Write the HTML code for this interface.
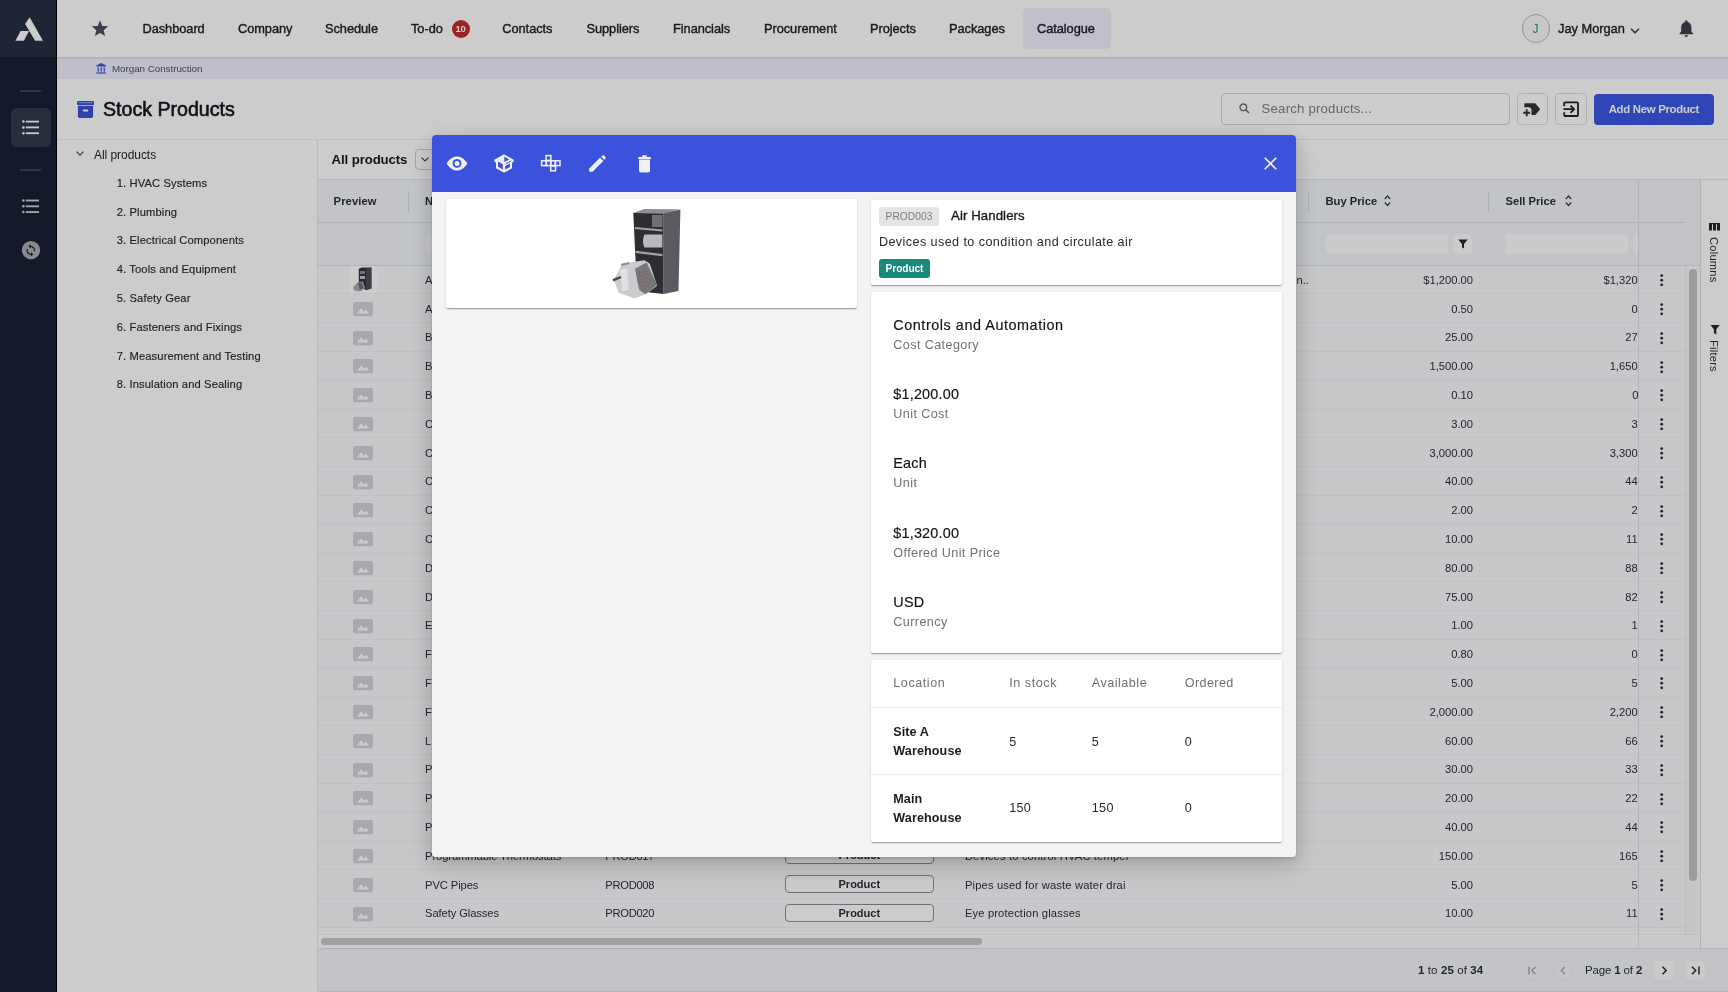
<!DOCTYPE html><html><head><meta charset="utf-8"><style>
*{box-sizing:border-box;margin:0;padding:0}
html,body{width:1728px;height:992px;overflow:hidden;background:#fff;font-family:"Liberation Sans",sans-serif;color:#1d1f24}
.a{position:absolute}
.t{position:absolute;white-space:nowrap;line-height:1}
svg{position:absolute;overflow:visible}
</style></head><body>
<div id="root" style="position:absolute;left:0;top:0;width:1728px;height:992px;overflow:hidden;will-change:transform">
<div class="a" style="left:0.00px;top:0.00px;width:56.00px;height:992.00px;background:#192033;"></div>
<div class="a" style="left:0.00px;top:0.00px;width:56.00px;height:57.00px;background:#263043;"></div>
<svg style="left:0;top:0" width="56" height="57"><polygon points="25.1,23.9 29.6,17.2 43,40.8 35.1,40.8" fill="#fff"/><polygon points="20.6,30.9 29,30.9 23.9,40.8 15.4,40.8" fill="#fff"/></svg>
<div class="a" style="left:56.00px;top:0.00px;width:1.00px;height:992.00px;background:#000;"></div>
<div class="a" style="left:20.00px;top:90.00px;width:21.00px;height:1.50px;background:#3a4358;"></div>
<div class="a" style="left:11.00px;top:107.60px;width:39.50px;height:39.90px;background:#313a4c;border-radius:6px;"></div>
<svg style="left:0px;top:0px" width="56" height="260"><circle cx="23.4" cy="121.6" r="1.25" fill="#ffffff"/><rect x="25.8" y="120.69999999999999" width="13.2" height="1.8" fill="#ffffff"/><circle cx="23.4" cy="127.39999999999999" r="1.25" fill="#ffffff"/><rect x="25.8" y="126.49999999999999" width="13.2" height="1.8" fill="#ffffff"/><circle cx="23.4" cy="133.2" r="1.25" fill="#ffffff"/><rect x="25.8" y="132.29999999999998" width="13.2" height="1.8" fill="#ffffff"/></svg>
<div class="a" style="left:20.00px;top:169.00px;width:21.00px;height:1.50px;background:#3a4358;"></div>
<svg style="left:0px;top:0px" width="56" height="260"><circle cx="23.4" cy="200.5" r="1.25" fill="#cfd1d6"/><rect x="25.8" y="199.6" width="13.2" height="1.8" fill="#cfd1d6"/><circle cx="23.4" cy="206.3" r="1.25" fill="#cfd1d6"/><rect x="25.8" y="205.4" width="13.2" height="1.8" fill="#cfd1d6"/><circle cx="23.4" cy="212.1" r="1.25" fill="#cfd1d6"/><rect x="25.8" y="211.2" width="13.2" height="1.8" fill="#cfd1d6"/></svg>
<svg style="left:0px;top:230px" width="56" height="40" viewBox="0 230 56 40"><circle cx="31" cy="250.1" r="9.2" fill="#aaadb3"/><path d="M30.2 246.3 Q34.6 246.4 34.6 251.3" stroke="#1c2130" stroke-width="1.2" fill="none"/><polygon points="28.4,246.3 30.8,244.2 30.8,248.4" fill="#1c2130"/><path d="M27 248.9 Q27 254.3 31.2 254.3" stroke="#1c2130" stroke-width="1.2" fill="none"/><polygon points="33.4,254.3 31,252.2 31,256.4" fill="#1c2130"/></svg>
<div class="a" style="left:57.00px;top:0.00px;width:1671.00px;height:57.00px;background:#ffffff;"></div>
<div class="a" style="left:57.00px;top:57.00px;width:1671.00px;height:2.00px;background:#dfe0e6;"></div>
<div class="a" style="left:1023.00px;top:8.00px;width:87.50px;height:41.00px;background:#f0f0fc;border-radius:5px;"></div>
<svg style="left:91px;top:20px" width="18" height="17" viewBox="0 0 24 23"><path d="M12 0.5 L15.1 8 L23.2 8.6 L17 13.9 L18.9 21.8 L12 17.6 L5.1 21.8 L7 13.9 L0.8 8.6 L8.9 8 Z" fill="#4a4f5e"/></svg>
<div class="t" style="top:23.22px;font-size:12.8px;font-weight:400;color:#1e2027;letter-spacing:-0.05px;left:142.50px;-webkit-text-stroke:0.4px #1e2027;">Dashboard</div>
<div class="t" style="top:23.22px;font-size:12.8px;font-weight:400;color:#1e2027;letter-spacing:-0.05px;left:238.00px;-webkit-text-stroke:0.4px #1e2027;">Company</div>
<div class="t" style="top:23.22px;font-size:12.8px;font-weight:400;color:#1e2027;letter-spacing:-0.05px;left:325.00px;-webkit-text-stroke:0.4px #1e2027;">Schedule</div>
<div class="t" style="top:23.22px;font-size:12.8px;font-weight:400;color:#1e2027;letter-spacing:-0.05px;left:411.00px;-webkit-text-stroke:0.4px #1e2027;">To-do</div>
<div class="t" style="top:23.22px;font-size:12.8px;font-weight:400;color:#1e2027;letter-spacing:-0.05px;left:502.30px;-webkit-text-stroke:0.4px #1e2027;">Contacts</div>
<div class="t" style="top:23.22px;font-size:12.8px;font-weight:400;color:#1e2027;letter-spacing:-0.05px;left:586.50px;-webkit-text-stroke:0.4px #1e2027;">Suppliers</div>
<div class="t" style="top:23.22px;font-size:12.8px;font-weight:400;color:#1e2027;letter-spacing:-0.05px;left:673.00px;-webkit-text-stroke:0.4px #1e2027;">Financials</div>
<div class="t" style="top:23.22px;font-size:12.8px;font-weight:400;color:#1e2027;letter-spacing:-0.05px;left:764.00px;-webkit-text-stroke:0.4px #1e2027;">Procurement</div>
<div class="t" style="top:23.22px;font-size:12.8px;font-weight:400;color:#1e2027;letter-spacing:-0.05px;left:870.00px;-webkit-text-stroke:0.4px #1e2027;">Projects</div>
<div class="t" style="top:23.22px;font-size:12.8px;font-weight:400;color:#1e2027;letter-spacing:-0.05px;left:949.00px;-webkit-text-stroke:0.4px #1e2027;">Packages</div>
<div class="t" style="top:23.22px;font-size:12.8px;font-weight:400;color:#1e2027;letter-spacing:-0.05px;left:1037.00px;-webkit-text-stroke:0.4px #1e2027;">Catalogue</div>
<div class="a" style="left:451.5px;top:20px;width:18px;height:18px;border-radius:9px;background:#c62a2c;color:#fff;font-size:9.5px;font-weight:700;line-height:18px;text-align:center;letter-spacing:-0.3px">10</div>
<div class="a" style="left:1521.8px;top:14.3px;width:28.6px;height:28.6px;border-radius:50%;border:1px solid #b9bcc2;background:#fbfbfb"></div>
<div class="t" style="top:22.80px;font-size:12px;font-weight:400;color:#2f8f86;left:1532.50px;">J</div>
<div class="t" style="top:23.22px;font-size:12.8px;font-weight:400;color:#1e2027;left:1558.00px;-webkit-text-stroke:0.4px #1e2027;">Jay Morgan</div>
<svg style="left:1630px;top:28px" width="10" height="6"><path d="M1 0.8 L5 4.8 L9 0.8" stroke="#333" stroke-width="1.4" fill="none"/></svg>
<svg style="left:1675.6px;top:18.2px" width="20.6" height="20.6" viewBox="0 0 24 24"><path d="M12 22c1.1 0 2-.9 2-2h-4c0 1.1.9 2 2 2zm6-6v-5c0-3.07-1.64-5.64-4.5-6.32V4c0-.83-.67-1.5-1.5-1.5s-1.5.67-1.5 1.5v.68C7.63 5.36 6 7.92 6 11v5l-2 2v1h16v-1l-2-2z" fill="#3c404b"/></svg>
<div class="a" style="left:57.00px;top:59.00px;width:1671.00px;height:20.00px;background:#eeeffb;"></div>
<svg style="left:95.6px;top:62.6px" width="10.4" height="10.6" viewBox="0 0 11 11.5"><path d="M5.5 0 L10.8 2.6 L10.8 3.8 L0.2 3.8 L0.2 2.6 Z" fill="#3c53d6"/><rect x="1.5" y="4.8" width="1.4" height="4.6" fill="#3c53d6"/><rect x="4.8" y="4.8" width="1.4" height="4.6" fill="#3c53d6"/><rect x="8.1" y="4.8" width="1.4" height="4.6" fill="#3c53d6"/><rect x="0.2" y="10.2" width="10.6" height="1.3" fill="#3c53d6"/></svg>
<div class="t" style="top:63.57px;font-size:9.8px;font-weight:400;color:#50535c;letter-spacing:-0.02px;left:111.90px;">Morgan Construction</div>
<svg style="left:77px;top:100.8px" width="17" height="17" viewBox="0 0 17 17"><rect x="0" y="0" width="17" height="4.2" rx="1.3" fill="#3a51d4"/><path d="M0.9 5 H16.1 V15.2 Q16.1 17 14.3 17 H2.7 Q0.9 17 0.9 15.2 Z" fill="#3a51d4"/><rect x="5.8" y="8.6" width="5.4" height="1.8" rx="0.6" fill="#fff"/><rect x="1.6" y="1.2" width="13.8" height="1" fill="#9aa6ea"/></svg>
<div class="t" style="top:99.84px;font-size:19.6px;font-weight:400;color:#111722;left:103.00px;-webkit-text-stroke:0.6px #111722;">Stock Products</div>
<div class="a" style="left:1221.4px;top:93.4px;width:288.5px;height:31.5px;border:1px solid #d3d4d8;border-radius:4px;background:#fff"></div>
<svg style="left:1238.5px;top:103px" width="11" height="11" viewBox="0 0 11 11"><circle cx="4.3" cy="4.3" r="3.3" stroke="#6c6f76" stroke-width="1.4" fill="none"/><path d="M6.7 6.7 L10 10" stroke="#6c6f76" stroke-width="1.6"/></svg>
<div class="t" style="top:102.48px;font-size:13.2px;font-weight:400;color:#7d8088;letter-spacing:0.2px;left:1261.60px;">Search products...</div>
<div class="a" style="left:1516.5px;top:93.4px;width:31.5px;height:31.5px;border:1px solid #dcdee6;border-radius:4px;background:#fff"></div>
<div class="a" style="left:1555.3px;top:93.4px;width:31.5px;height:31.5px;border:1px solid #dcdee6;border-radius:4px;background:#fff"></div>
<svg style="left:1512px;top:90px" width="80" height="38" viewBox="1512 90 80 38"><path d="M1525.3 103.2 H1535.3 L1540.2 109.2 L1535.3 115 H1531.5 V110.5 Q1531.5 107.2 1528.5 107.2 H1524.3 V104.2 Q1524.3 103.2 1525.3 103.2 Z" fill="#30343c"/><path d="M1523.2 112.7 H1530.2 M1526.7 109.2 V116.2" stroke="#30343c" stroke-width="1.9"/></svg>
<svg style="left:1512px;top:90px" width="80" height="38" viewBox="1512 90 80 38"><path d="M1564.2 106.2 V103.3 Q1564.2 102.3 1565.2 102.3 H1577 Q1578 102.3 1578 103.3 V115 Q1578 116 1577 116 H1565.2 Q1564.2 116 1564.2 115 V112.2" stroke="#1f232b" stroke-width="1.8" fill="none"/><path d="M1563.4 109.2 H1574 M1570.5 105.6 L1574.1 109.2 L1570.5 112.8" stroke="#1f232b" stroke-width="1.8" fill="none"/></svg>
<div class="a" style="left:1594.3px;top:94px;width:119.3px;height:30.6px;border-radius:4px;background:#3d58e6"></div>
<div class="t" style="top:103.61px;font-size:11.4px;font-weight:700;color:#ffffff;letter-spacing:-0.3px;left:1608.70px;">Add New Product</div>
<div class="a" style="left:57.00px;top:139.00px;width:1671.00px;height:1.00px;background:#eef0f3;"></div>
<svg style="left:75.5px;top:151px" width="8" height="5.5"><path d="M0.6 0.6 L4 4.2 L7.4 0.6" stroke="#444" stroke-width="1.2" fill="none"/></svg>
<div class="t" style="top:148.80px;font-size:12px;font-weight:400;color:#22252b;letter-spacing:-0.05px;left:94.00px;">All products</div>
<div class="t" style="top:177.88px;font-size:11.2px;font-weight:400;color:#262930;letter-spacing:0.12px;left:116.70px;-webkit-text-stroke:0.15px #262930;">1. HVAC Systems</div>
<div class="t" style="top:206.68px;font-size:11.2px;font-weight:400;color:#262930;letter-spacing:0.12px;left:116.70px;-webkit-text-stroke:0.15px #262930;">2. Plumbing</div>
<div class="t" style="top:235.48px;font-size:11.2px;font-weight:400;color:#262930;letter-spacing:0.12px;left:116.70px;-webkit-text-stroke:0.15px #262930;">3. Electrical Components</div>
<div class="t" style="top:264.28px;font-size:11.2px;font-weight:400;color:#262930;letter-spacing:0.12px;left:116.70px;-webkit-text-stroke:0.15px #262930;">4. Tools and Equipment</div>
<div class="t" style="top:293.08px;font-size:11.2px;font-weight:400;color:#262930;letter-spacing:0.12px;left:116.70px;-webkit-text-stroke:0.15px #262930;">5. Safety Gear</div>
<div class="t" style="top:321.88px;font-size:11.2px;font-weight:400;color:#262930;letter-spacing:0.12px;left:116.70px;-webkit-text-stroke:0.15px #262930;">6. Fasteners and Fixings</div>
<div class="t" style="top:350.68px;font-size:11.2px;font-weight:400;color:#262930;letter-spacing:0.12px;left:116.70px;-webkit-text-stroke:0.15px #262930;">7. Measurement and Testing</div>
<div class="t" style="top:379.48px;font-size:11.2px;font-weight:400;color:#262930;letter-spacing:0.12px;left:116.70px;-webkit-text-stroke:0.15px #262930;">8. Insulation and Sealing</div>
<div class="a" style="left:317.00px;top:140.00px;width:1.00px;height:852.00px;background:#e6e8ec;"></div>
<div class="t" style="top:152.78px;font-size:13.2px;font-weight:700;color:#15181f;letter-spacing:-0.1px;left:331.60px;">All products</div>
<div class="a" style="left:414.5px;top:149px;width:30px;height:21.4px;border:1px solid #c7ccef;border-radius:4px;background:#fff"></div>
<svg style="left:421px;top:157px" width="8" height="5"><path d="M0.6 0.6 L4 4 L7.4 0.6" stroke="#444" stroke-width="1.2" fill="none"/></svg>
<div class="a" style="left:318.00px;top:265.60px;width:1366.70px;height:668.20px;background:#f9fafd;"></div>
<div class="a" style="left:318.00px;top:179.60px;width:1382.40px;height:86.00px;background:#f3f6fb;"></div>
<div class="a" style="left:318.00px;top:221.80px;width:1366.70px;height:1.00px;background:#dfe2e8;"></div>
<div class="a" style="left:318.00px;top:265.20px;width:1382.40px;height:0.80px;background:#dfe2e8;"></div>
<div class="a" style="left:1700.20px;top:179.60px;width:27.80px;height:768.90px;background:#ffffff;"></div>
<div class="a" style="left:1700.20px;top:179.60px;width:1.00px;height:768.90px;background:#dde0e6;"></div>
<div class="a" style="left:318.00px;top:179.20px;width:1410.00px;height:0.60px;background:#e5e7ec;"></div>
<div class="t" style="top:195.68px;font-size:11.2px;font-weight:700;color:#2a2d35;letter-spacing:0.1px;left:333.60px;">Preview</div>
<div class="a" style="left:408.00px;top:190.70px;width:1.00px;height:21.10px;background:#d9dce3;"></div>
<div class="t" style="top:195.68px;font-size:11.2px;font-weight:700;color:#2a2d35;letter-spacing:0.1px;left:425.00px;">Name</div>
<div class="a" style="left:1308.00px;top:190.70px;width:1.00px;height:21.10px;background:#d9dce3;"></div>
<div class="t" style="top:195.68px;font-size:11.2px;font-weight:700;color:#2a2d35;left:1325.50px;">Buy Price</div>
<div class="a" style="left:1488.20px;top:190.70px;width:1.00px;height:21.10px;background:#d9dce3;"></div>
<div class="t" style="top:195.68px;font-size:11.2px;font-weight:700;color:#2a2d35;left:1505.50px;">Sell Price</div>
<svg style="left:1384.3px;top:195.3px" width="7" height="11.5"><path d="M0.8 4 L3.5 1 L6.2 4 M0.8 7.5 L3.5 10.5 L6.2 7.5" stroke="#3a3d45" stroke-width="1.3" fill="none"/></svg>
<svg style="left:1564.5px;top:195.3px" width="7" height="11.5"><path d="M0.8 4 L3.5 1 L6.2 4 M0.8 7.5 L3.5 10.5 L6.2 7.5" stroke="#3a3d45" stroke-width="1.3" fill="none"/></svg>
<div class="a" style="left:425.5px;top:233.8px;width:154.5px;height:19.8px;border-radius:4px;background:#fefefe"></div>
<div class="a" style="left:1325.5px;top:233.8px;width:122.40000000000009px;height:19.8px;border-radius:4px;background:#fefefe"></div>
<div class="a" style="left:1505.5px;top:233.8px;width:122.5px;height:19.8px;border-radius:4px;background:#fefefe"></div>
<div class="a" style="left:1452.7px;top:233.8px;width:19.3px;height:19.8px;border-radius:4px;background:#fefefe;overflow:hidden"></div>
<div class="a" style="left:1632.7px;top:233.8px;width:5.8px;height:19.8px;border-radius:4px 0 0 4px;background:#fefefe"></div>
<svg style="left:1457.5px;top:238.5px" width="10" height="10" viewBox="0 0 10 10"><path d="M0.3 0.5 H9.7 L6 5 V9.5 L4 8.2 V5 Z" fill="#262930"/></svg>
<div class="a" style="left:1638.20px;top:179.60px;width:1.00px;height:768.90px;background:#dfe2e8;"></div>
<div class="a" style="left:318.00px;top:293.00px;width:1366.70px;height:1.00px;background:#f0f2f5;"></div>
<svg style="left:349.6px;top:266.20000000000005px" width="27.4" height="27.2" viewBox="0 0 27.4 27.2"><rect x="0" y="0" width="27.4" height="27.2" fill="#ffffff"/><path d="M8.8 2.8 L12 1.5 L21.4 1.5 L21.4 22.5 L16 24 L8.8 21 Z" fill="#30343c"/><path d="M16 2.6 L21.4 1.5 L21.4 22.5 L16 24 Z" fill="#4a4e57"/><rect x="10" y="5" width="5" height="3" fill="#8d9199"/><rect x="10" y="10" width="5" height="3" fill="#c4c6ca"/><path d="M3.2 21 L8 16 L13 15.5 L15 22 L10 25.5 L4 24.5 Z" fill="#a9acb2"/><path d="M8 17 L12 16.5 L13.5 22 L10 24 Z" fill="#6a6e75"/></svg>
<div class="t" style="top:274.78px;font-size:11.2px;font-weight:400;color:#2b2e36;letter-spacing:-0.1px;left:425.10px;">A</div>
<div class="t" style="top:274.78px;font-size:11.2px;font-weight:400;color:#2b2e36;letter-spacing:-0.3px;left:605.30px;">PROD003</div>
<div class="a" style="left:785px;top:270.40000000000003px;width:148.6px;height:18px;border:1px solid #8a8d94;border-radius:4px;background:#fff;text-align:center;font-size:11px;font-weight:700;line-height:16px;color:#2b2e36">Product</div>
<div class="t" style="top:274.78px;font-size:11.2px;font-weight:400;color:#2b2e36;letter-spacing:0.15px;left:964.90px;">Devices used to condition and circulate air</div>
<div class="t" style="top:274.78px;font-size:11.2px;font-weight:400;color:#2b2e36;right:255.00px;">$1,200.00</div>
<div class="a" style="left:1489.2px;top:265.6px;width:149px;height:28.8px;overflow:hidden"><div class="t" style="right:-15px;top:9.18px;font-size:11.2px;color:#2b2e36">$1,320.00</div></div>
<svg style="left:1659.8px;top:274.20000000000005px" width="3.4" height="12"><circle cx="1.7" cy="1.6" r="1.4" fill="#2b2e36"/><circle cx="1.7" cy="6.2" r="1.4" fill="#2b2e36"/><circle cx="1.7" cy="10.8" r="1.4" fill="#2b2e36"/></svg>
<div class="a" style="left:318.00px;top:322.00px;width:1366.70px;height:1.00px;background:#f0f2f5;"></div>
<svg style="left:353.3px;top:301.70000000000005px" width="20" height="14.3" viewBox="0 0 20 14.3"><rect width="20" height="14.3" rx="1.8" fill="#d2d4da"/><path d="M4 11.5 L8 6.5 L11 9.5 L13 7.8 L16 11.5 Z" fill="#fff"/></svg>
<div class="t" style="top:303.58px;font-size:11.2px;font-weight:400;color:#2b2e36;letter-spacing:-0.1px;left:425.10px;">A</div>
<div class="t" style="top:303.58px;font-size:11.2px;font-weight:400;color:#2b2e36;letter-spacing:-0.3px;left:605.30px;">PROD001</div>
<div class="a" style="left:785px;top:299.20000000000005px;width:148.6px;height:18px;border:1px solid #8a8d94;border-radius:4px;background:#fff;text-align:center;font-size:11px;font-weight:700;line-height:16px;color:#2b2e36">Product</div>
<div class="t" style="top:303.58px;font-size:11.2px;font-weight:400;color:#2b2e36;right:255.00px;">0.50</div>
<div class="a" style="left:1489.2px;top:294.40000000000003px;width:149px;height:28.8px;overflow:hidden"><div class="t" style="right:-15px;top:9.18px;font-size:11.2px;color:#2b2e36">0.55</div></div>
<svg style="left:1659.8px;top:303.00000000000006px" width="3.4" height="12"><circle cx="1.7" cy="1.6" r="1.4" fill="#2b2e36"/><circle cx="1.7" cy="6.2" r="1.4" fill="#2b2e36"/><circle cx="1.7" cy="10.8" r="1.4" fill="#2b2e36"/></svg>
<div class="a" style="left:318.00px;top:351.00px;width:1366.70px;height:1.00px;background:#f0f2f5;"></div>
<svg style="left:353.3px;top:330.50000000000006px" width="20" height="14.3" viewBox="0 0 20 14.3"><rect width="20" height="14.3" rx="1.8" fill="#d2d4da"/><path d="M4 11.5 L8 6.5 L11 9.5 L13 7.8 L16 11.5 Z" fill="#fff"/></svg>
<div class="t" style="top:332.38px;font-size:11.2px;font-weight:400;color:#2b2e36;letter-spacing:-0.1px;left:425.10px;">B</div>
<div class="t" style="top:332.38px;font-size:11.2px;font-weight:400;color:#2b2e36;letter-spacing:-0.3px;left:605.30px;">PROD002</div>
<div class="a" style="left:785px;top:328.00000000000006px;width:148.6px;height:18px;border:1px solid #8a8d94;border-radius:4px;background:#fff;text-align:center;font-size:11px;font-weight:700;line-height:16px;color:#2b2e36">Product</div>
<div class="t" style="top:332.38px;font-size:11.2px;font-weight:400;color:#2b2e36;right:255.00px;">25.00</div>
<div class="a" style="left:1489.2px;top:323.20000000000005px;width:149px;height:28.8px;overflow:hidden"><div class="t" style="right:-15px;top:9.18px;font-size:11.2px;color:#2b2e36">27.50</div></div>
<svg style="left:1659.8px;top:331.80000000000007px" width="3.4" height="12"><circle cx="1.7" cy="1.6" r="1.4" fill="#2b2e36"/><circle cx="1.7" cy="6.2" r="1.4" fill="#2b2e36"/><circle cx="1.7" cy="10.8" r="1.4" fill="#2b2e36"/></svg>
<div class="a" style="left:318.00px;top:380.00px;width:1366.70px;height:1.00px;background:#f0f2f5;"></div>
<svg style="left:353.3px;top:359.3px" width="20" height="14.3" viewBox="0 0 20 14.3"><rect width="20" height="14.3" rx="1.8" fill="#d2d4da"/><path d="M4 11.5 L8 6.5 L11 9.5 L13 7.8 L16 11.5 Z" fill="#fff"/></svg>
<div class="t" style="top:361.18px;font-size:11.2px;font-weight:400;color:#2b2e36;letter-spacing:-0.1px;left:425.10px;">B</div>
<div class="t" style="top:361.18px;font-size:11.2px;font-weight:400;color:#2b2e36;letter-spacing:-0.3px;left:605.30px;">PROD004</div>
<div class="a" style="left:785px;top:356.8px;width:148.6px;height:18px;border:1px solid #8a8d94;border-radius:4px;background:#fff;text-align:center;font-size:11px;font-weight:700;line-height:16px;color:#2b2e36">Product</div>
<div class="t" style="top:361.18px;font-size:11.2px;font-weight:400;color:#2b2e36;right:255.00px;">1,500.00</div>
<div class="a" style="left:1489.2px;top:352.0px;width:149px;height:28.8px;overflow:hidden"><div class="t" style="right:-15px;top:9.18px;font-size:11.2px;color:#2b2e36">1,650.00</div></div>
<svg style="left:1659.8px;top:360.6px" width="3.4" height="12"><circle cx="1.7" cy="1.6" r="1.4" fill="#2b2e36"/><circle cx="1.7" cy="6.2" r="1.4" fill="#2b2e36"/><circle cx="1.7" cy="10.8" r="1.4" fill="#2b2e36"/></svg>
<div class="a" style="left:318.00px;top:409.00px;width:1366.70px;height:1.00px;background:#f0f2f5;"></div>
<svg style="left:353.3px;top:388.1px" width="20" height="14.3" viewBox="0 0 20 14.3"><rect width="20" height="14.3" rx="1.8" fill="#d2d4da"/><path d="M4 11.5 L8 6.5 L11 9.5 L13 7.8 L16 11.5 Z" fill="#fff"/></svg>
<div class="t" style="top:389.98px;font-size:11.2px;font-weight:400;color:#2b2e36;letter-spacing:-0.1px;left:425.10px;">B</div>
<div class="t" style="top:389.98px;font-size:11.2px;font-weight:400;color:#2b2e36;letter-spacing:-0.3px;left:605.30px;">PROD005</div>
<div class="a" style="left:785px;top:385.6px;width:148.6px;height:18px;border:1px solid #8a8d94;border-radius:4px;background:#fff;text-align:center;font-size:11px;font-weight:700;line-height:16px;color:#2b2e36">Product</div>
<div class="t" style="top:389.98px;font-size:11.2px;font-weight:400;color:#2b2e36;right:255.00px;">0.10</div>
<div class="a" style="left:1489.2px;top:380.8px;width:149px;height:28.8px;overflow:hidden"><div class="t" style="right:-15px;top:9.18px;font-size:11.2px;color:#2b2e36">0.11</div></div>
<svg style="left:1659.8px;top:389.40000000000003px" width="3.4" height="12"><circle cx="1.7" cy="1.6" r="1.4" fill="#2b2e36"/><circle cx="1.7" cy="6.2" r="1.4" fill="#2b2e36"/><circle cx="1.7" cy="10.8" r="1.4" fill="#2b2e36"/></svg>
<div class="a" style="left:318.00px;top:437.00px;width:1366.70px;height:1.00px;background:#f0f2f5;"></div>
<svg style="left:353.3px;top:416.90000000000003px" width="20" height="14.3" viewBox="0 0 20 14.3"><rect width="20" height="14.3" rx="1.8" fill="#d2d4da"/><path d="M4 11.5 L8 6.5 L11 9.5 L13 7.8 L16 11.5 Z" fill="#fff"/></svg>
<div class="t" style="top:418.78px;font-size:11.2px;font-weight:400;color:#2b2e36;letter-spacing:-0.1px;left:425.10px;">C</div>
<div class="t" style="top:418.78px;font-size:11.2px;font-weight:400;color:#2b2e36;letter-spacing:-0.3px;left:605.30px;">PROD006</div>
<div class="a" style="left:785px;top:414.40000000000003px;width:148.6px;height:18px;border:1px solid #8a8d94;border-radius:4px;background:#fff;text-align:center;font-size:11px;font-weight:700;line-height:16px;color:#2b2e36">Product</div>
<div class="t" style="top:418.78px;font-size:11.2px;font-weight:400;color:#2b2e36;right:255.00px;">3.00</div>
<div class="a" style="left:1489.2px;top:409.6px;width:149px;height:28.8px;overflow:hidden"><div class="t" style="right:-15px;top:9.18px;font-size:11.2px;color:#2b2e36">3.30</div></div>
<svg style="left:1659.8px;top:418.20000000000005px" width="3.4" height="12"><circle cx="1.7" cy="1.6" r="1.4" fill="#2b2e36"/><circle cx="1.7" cy="6.2" r="1.4" fill="#2b2e36"/><circle cx="1.7" cy="10.8" r="1.4" fill="#2b2e36"/></svg>
<div class="a" style="left:318.00px;top:466.00px;width:1366.70px;height:1.00px;background:#f0f2f5;"></div>
<svg style="left:353.3px;top:445.70000000000005px" width="20" height="14.3" viewBox="0 0 20 14.3"><rect width="20" height="14.3" rx="1.8" fill="#d2d4da"/><path d="M4 11.5 L8 6.5 L11 9.5 L13 7.8 L16 11.5 Z" fill="#fff"/></svg>
<div class="t" style="top:447.58px;font-size:11.2px;font-weight:400;color:#2b2e36;letter-spacing:-0.1px;left:425.10px;">C</div>
<div class="t" style="top:447.58px;font-size:11.2px;font-weight:400;color:#2b2e36;letter-spacing:-0.3px;left:605.30px;">PROD007</div>
<div class="a" style="left:785px;top:443.20000000000005px;width:148.6px;height:18px;border:1px solid #8a8d94;border-radius:4px;background:#fff;text-align:center;font-size:11px;font-weight:700;line-height:16px;color:#2b2e36">Product</div>
<div class="t" style="top:447.58px;font-size:11.2px;font-weight:400;color:#2b2e36;right:255.00px;">3,000.00</div>
<div class="a" style="left:1489.2px;top:438.40000000000003px;width:149px;height:28.8px;overflow:hidden"><div class="t" style="right:-15px;top:9.18px;font-size:11.2px;color:#2b2e36">3,300.00</div></div>
<svg style="left:1659.8px;top:447.00000000000006px" width="3.4" height="12"><circle cx="1.7" cy="1.6" r="1.4" fill="#2b2e36"/><circle cx="1.7" cy="6.2" r="1.4" fill="#2b2e36"/><circle cx="1.7" cy="10.8" r="1.4" fill="#2b2e36"/></svg>
<div class="a" style="left:318.00px;top:495.00px;width:1366.70px;height:1.00px;background:#f0f2f5;"></div>
<svg style="left:353.3px;top:474.50000000000006px" width="20" height="14.3" viewBox="0 0 20 14.3"><rect width="20" height="14.3" rx="1.8" fill="#d2d4da"/><path d="M4 11.5 L8 6.5 L11 9.5 L13 7.8 L16 11.5 Z" fill="#fff"/></svg>
<div class="t" style="top:476.38px;font-size:11.2px;font-weight:400;color:#2b2e36;letter-spacing:-0.1px;left:425.10px;">C</div>
<div class="t" style="top:476.38px;font-size:11.2px;font-weight:400;color:#2b2e36;letter-spacing:-0.3px;left:605.30px;">PROD009</div>
<div class="a" style="left:785px;top:472.00000000000006px;width:148.6px;height:18px;border:1px solid #8a8d94;border-radius:4px;background:#fff;text-align:center;font-size:11px;font-weight:700;line-height:16px;color:#2b2e36">Product</div>
<div class="t" style="top:476.38px;font-size:11.2px;font-weight:400;color:#2b2e36;right:255.00px;">40.00</div>
<div class="a" style="left:1489.2px;top:467.20000000000005px;width:149px;height:28.8px;overflow:hidden"><div class="t" style="right:-15px;top:9.18px;font-size:11.2px;color:#2b2e36">44.00</div></div>
<svg style="left:1659.8px;top:475.80000000000007px" width="3.4" height="12"><circle cx="1.7" cy="1.6" r="1.4" fill="#2b2e36"/><circle cx="1.7" cy="6.2" r="1.4" fill="#2b2e36"/><circle cx="1.7" cy="10.8" r="1.4" fill="#2b2e36"/></svg>
<div class="a" style="left:318.00px;top:524.00px;width:1366.70px;height:1.00px;background:#f0f2f5;"></div>
<svg style="left:353.3px;top:503.3px" width="20" height="14.3" viewBox="0 0 20 14.3"><rect width="20" height="14.3" rx="1.8" fill="#d2d4da"/><path d="M4 11.5 L8 6.5 L11 9.5 L13 7.8 L16 11.5 Z" fill="#fff"/></svg>
<div class="t" style="top:505.18px;font-size:11.2px;font-weight:400;color:#2b2e36;letter-spacing:-0.1px;left:425.10px;">C</div>
<div class="t" style="top:505.18px;font-size:11.2px;font-weight:400;color:#2b2e36;letter-spacing:-0.3px;left:605.30px;">PROD010</div>
<div class="a" style="left:785px;top:500.8px;width:148.6px;height:18px;border:1px solid #8a8d94;border-radius:4px;background:#fff;text-align:center;font-size:11px;font-weight:700;line-height:16px;color:#2b2e36">Product</div>
<div class="t" style="top:505.18px;font-size:11.2px;font-weight:400;color:#2b2e36;right:255.00px;">2.00</div>
<div class="a" style="left:1489.2px;top:496.0px;width:149px;height:28.8px;overflow:hidden"><div class="t" style="right:-15px;top:9.18px;font-size:11.2px;color:#2b2e36">2.20</div></div>
<svg style="left:1659.8px;top:504.6px" width="3.4" height="12"><circle cx="1.7" cy="1.6" r="1.4" fill="#2b2e36"/><circle cx="1.7" cy="6.2" r="1.4" fill="#2b2e36"/><circle cx="1.7" cy="10.8" r="1.4" fill="#2b2e36"/></svg>
<div class="a" style="left:318.00px;top:553.00px;width:1366.70px;height:1.00px;background:#f0f2f5;"></div>
<svg style="left:353.3px;top:532.0999999999999px" width="20" height="14.3" viewBox="0 0 20 14.3"><rect width="20" height="14.3" rx="1.8" fill="#d2d4da"/><path d="M4 11.5 L8 6.5 L11 9.5 L13 7.8 L16 11.5 Z" fill="#fff"/></svg>
<div class="t" style="top:533.98px;font-size:11.2px;font-weight:400;color:#2b2e36;letter-spacing:-0.1px;left:425.10px;">C</div>
<div class="t" style="top:533.98px;font-size:11.2px;font-weight:400;color:#2b2e36;letter-spacing:-0.3px;left:605.30px;">PROD011</div>
<div class="a" style="left:785px;top:529.5999999999999px;width:148.6px;height:18px;border:1px solid #8a8d94;border-radius:4px;background:#fff;text-align:center;font-size:11px;font-weight:700;line-height:16px;color:#2b2e36">Product</div>
<div class="t" style="top:533.98px;font-size:11.2px;font-weight:400;color:#2b2e36;right:255.00px;">10.00</div>
<div class="a" style="left:1489.2px;top:524.8px;width:149px;height:28.8px;overflow:hidden"><div class="t" style="right:-15px;top:9.18px;font-size:11.2px;color:#2b2e36">11.00</div></div>
<svg style="left:1659.8px;top:533.4px" width="3.4" height="12"><circle cx="1.7" cy="1.6" r="1.4" fill="#2b2e36"/><circle cx="1.7" cy="6.2" r="1.4" fill="#2b2e36"/><circle cx="1.7" cy="10.8" r="1.4" fill="#2b2e36"/></svg>
<div class="a" style="left:318.00px;top:581.00px;width:1366.70px;height:1.00px;background:#f0f2f5;"></div>
<svg style="left:353.3px;top:560.9px" width="20" height="14.3" viewBox="0 0 20 14.3"><rect width="20" height="14.3" rx="1.8" fill="#d2d4da"/><path d="M4 11.5 L8 6.5 L11 9.5 L13 7.8 L16 11.5 Z" fill="#fff"/></svg>
<div class="t" style="top:562.78px;font-size:11.2px;font-weight:400;color:#2b2e36;letter-spacing:-0.1px;left:425.10px;">D</div>
<div class="t" style="top:562.78px;font-size:11.2px;font-weight:400;color:#2b2e36;letter-spacing:-0.3px;left:605.30px;">PROD012</div>
<div class="a" style="left:785px;top:558.4px;width:148.6px;height:18px;border:1px solid #8a8d94;border-radius:4px;background:#fff;text-align:center;font-size:11px;font-weight:700;line-height:16px;color:#2b2e36">Product</div>
<div class="t" style="top:562.78px;font-size:11.2px;font-weight:400;color:#2b2e36;right:255.00px;">80.00</div>
<div class="a" style="left:1489.2px;top:553.6px;width:149px;height:28.8px;overflow:hidden"><div class="t" style="right:-15px;top:9.18px;font-size:11.2px;color:#2b2e36">88.00</div></div>
<svg style="left:1659.8px;top:562.2px" width="3.4" height="12"><circle cx="1.7" cy="1.6" r="1.4" fill="#2b2e36"/><circle cx="1.7" cy="6.2" r="1.4" fill="#2b2e36"/><circle cx="1.7" cy="10.8" r="1.4" fill="#2b2e36"/></svg>
<div class="a" style="left:318.00px;top:610.00px;width:1366.70px;height:1.00px;background:#f0f2f5;"></div>
<svg style="left:353.3px;top:589.7px" width="20" height="14.3" viewBox="0 0 20 14.3"><rect width="20" height="14.3" rx="1.8" fill="#d2d4da"/><path d="M4 11.5 L8 6.5 L11 9.5 L13 7.8 L16 11.5 Z" fill="#fff"/></svg>
<div class="t" style="top:591.58px;font-size:11.2px;font-weight:400;color:#2b2e36;letter-spacing:-0.1px;left:425.10px;">D</div>
<div class="t" style="top:591.58px;font-size:11.2px;font-weight:400;color:#2b2e36;letter-spacing:-0.3px;left:605.30px;">PROD013</div>
<div class="a" style="left:785px;top:587.2px;width:148.6px;height:18px;border:1px solid #8a8d94;border-radius:4px;background:#fff;text-align:center;font-size:11px;font-weight:700;line-height:16px;color:#2b2e36">Product</div>
<div class="t" style="top:591.58px;font-size:11.2px;font-weight:400;color:#2b2e36;right:255.00px;">75.00</div>
<div class="a" style="left:1489.2px;top:582.4000000000001px;width:149px;height:28.8px;overflow:hidden"><div class="t" style="right:-15px;top:9.18px;font-size:11.2px;color:#2b2e36">82.50</div></div>
<svg style="left:1659.8px;top:591.0000000000001px" width="3.4" height="12"><circle cx="1.7" cy="1.6" r="1.4" fill="#2b2e36"/><circle cx="1.7" cy="6.2" r="1.4" fill="#2b2e36"/><circle cx="1.7" cy="10.8" r="1.4" fill="#2b2e36"/></svg>
<div class="a" style="left:318.00px;top:639.00px;width:1366.70px;height:1.00px;background:#f0f2f5;"></div>
<svg style="left:353.3px;top:618.5px" width="20" height="14.3" viewBox="0 0 20 14.3"><rect width="20" height="14.3" rx="1.8" fill="#d2d4da"/><path d="M4 11.5 L8 6.5 L11 9.5 L13 7.8 L16 11.5 Z" fill="#fff"/></svg>
<div class="t" style="top:620.38px;font-size:11.2px;font-weight:400;color:#2b2e36;letter-spacing:-0.1px;left:425.10px;">E</div>
<div class="t" style="top:620.38px;font-size:11.2px;font-weight:400;color:#2b2e36;letter-spacing:-0.3px;left:605.30px;">PROD014</div>
<div class="a" style="left:785px;top:616.0px;width:148.6px;height:18px;border:1px solid #8a8d94;border-radius:4px;background:#fff;text-align:center;font-size:11px;font-weight:700;line-height:16px;color:#2b2e36">Product</div>
<div class="t" style="top:620.38px;font-size:11.2px;font-weight:400;color:#2b2e36;right:255.00px;">1.00</div>
<div class="a" style="left:1489.2px;top:611.2px;width:149px;height:28.8px;overflow:hidden"><div class="t" style="right:-15px;top:9.18px;font-size:11.2px;color:#2b2e36">1.10</div></div>
<svg style="left:1659.8px;top:619.8000000000001px" width="3.4" height="12"><circle cx="1.7" cy="1.6" r="1.4" fill="#2b2e36"/><circle cx="1.7" cy="6.2" r="1.4" fill="#2b2e36"/><circle cx="1.7" cy="10.8" r="1.4" fill="#2b2e36"/></svg>
<div class="a" style="left:318.00px;top:668.00px;width:1366.70px;height:1.00px;background:#f0f2f5;"></div>
<svg style="left:353.3px;top:647.3px" width="20" height="14.3" viewBox="0 0 20 14.3"><rect width="20" height="14.3" rx="1.8" fill="#d2d4da"/><path d="M4 11.5 L8 6.5 L11 9.5 L13 7.8 L16 11.5 Z" fill="#fff"/></svg>
<div class="t" style="top:649.18px;font-size:11.2px;font-weight:400;color:#2b2e36;letter-spacing:-0.1px;left:425.10px;">F</div>
<div class="t" style="top:649.18px;font-size:11.2px;font-weight:400;color:#2b2e36;letter-spacing:-0.3px;left:605.30px;">PROD015</div>
<div class="a" style="left:785px;top:644.8px;width:148.6px;height:18px;border:1px solid #8a8d94;border-radius:4px;background:#fff;text-align:center;font-size:11px;font-weight:700;line-height:16px;color:#2b2e36">Product</div>
<div class="t" style="top:649.18px;font-size:11.2px;font-weight:400;color:#2b2e36;right:255.00px;">0.80</div>
<div class="a" style="left:1489.2px;top:640.0px;width:149px;height:28.8px;overflow:hidden"><div class="t" style="right:-15px;top:9.18px;font-size:11.2px;color:#2b2e36">0.88</div></div>
<svg style="left:1659.8px;top:648.6px" width="3.4" height="12"><circle cx="1.7" cy="1.6" r="1.4" fill="#2b2e36"/><circle cx="1.7" cy="6.2" r="1.4" fill="#2b2e36"/><circle cx="1.7" cy="10.8" r="1.4" fill="#2b2e36"/></svg>
<div class="a" style="left:318.00px;top:697.00px;width:1366.70px;height:1.00px;background:#f0f2f5;"></div>
<svg style="left:353.3px;top:676.0999999999999px" width="20" height="14.3" viewBox="0 0 20 14.3"><rect width="20" height="14.3" rx="1.8" fill="#d2d4da"/><path d="M4 11.5 L8 6.5 L11 9.5 L13 7.8 L16 11.5 Z" fill="#fff"/></svg>
<div class="t" style="top:677.98px;font-size:11.2px;font-weight:400;color:#2b2e36;letter-spacing:-0.1px;left:425.10px;">F</div>
<div class="t" style="top:677.98px;font-size:11.2px;font-weight:400;color:#2b2e36;letter-spacing:-0.3px;left:605.30px;">PROD016</div>
<div class="a" style="left:785px;top:673.5999999999999px;width:148.6px;height:18px;border:1px solid #8a8d94;border-radius:4px;background:#fff;text-align:center;font-size:11px;font-weight:700;line-height:16px;color:#2b2e36">Product</div>
<div class="t" style="top:677.98px;font-size:11.2px;font-weight:400;color:#2b2e36;right:255.00px;">5.00</div>
<div class="a" style="left:1489.2px;top:668.8px;width:149px;height:28.8px;overflow:hidden"><div class="t" style="right:-15px;top:9.18px;font-size:11.2px;color:#2b2e36">5.50</div></div>
<svg style="left:1659.8px;top:677.4px" width="3.4" height="12"><circle cx="1.7" cy="1.6" r="1.4" fill="#2b2e36"/><circle cx="1.7" cy="6.2" r="1.4" fill="#2b2e36"/><circle cx="1.7" cy="10.8" r="1.4" fill="#2b2e36"/></svg>
<div class="a" style="left:318.00px;top:725.00px;width:1366.70px;height:1.00px;background:#f0f2f5;"></div>
<svg style="left:353.3px;top:704.9px" width="20" height="14.3" viewBox="0 0 20 14.3"><rect width="20" height="14.3" rx="1.8" fill="#d2d4da"/><path d="M4 11.5 L8 6.5 L11 9.5 L13 7.8 L16 11.5 Z" fill="#fff"/></svg>
<div class="t" style="top:706.78px;font-size:11.2px;font-weight:400;color:#2b2e36;letter-spacing:-0.1px;left:425.10px;">F</div>
<div class="t" style="top:706.78px;font-size:11.2px;font-weight:400;color:#2b2e36;letter-spacing:-0.3px;left:605.30px;">PROD018</div>
<div class="a" style="left:785px;top:702.4px;width:148.6px;height:18px;border:1px solid #8a8d94;border-radius:4px;background:#fff;text-align:center;font-size:11px;font-weight:700;line-height:16px;color:#2b2e36">Product</div>
<div class="t" style="top:706.78px;font-size:11.2px;font-weight:400;color:#2b2e36;right:255.00px;">2,000.00</div>
<div class="a" style="left:1489.2px;top:697.6px;width:149px;height:28.8px;overflow:hidden"><div class="t" style="right:-15px;top:9.18px;font-size:11.2px;color:#2b2e36">2,200.00</div></div>
<svg style="left:1659.8px;top:706.2px" width="3.4" height="12"><circle cx="1.7" cy="1.6" r="1.4" fill="#2b2e36"/><circle cx="1.7" cy="6.2" r="1.4" fill="#2b2e36"/><circle cx="1.7" cy="10.8" r="1.4" fill="#2b2e36"/></svg>
<div class="a" style="left:318.00px;top:754.00px;width:1366.70px;height:1.00px;background:#f0f2f5;"></div>
<svg style="left:353.3px;top:733.7px" width="20" height="14.3" viewBox="0 0 20 14.3"><rect width="20" height="14.3" rx="1.8" fill="#d2d4da"/><path d="M4 11.5 L8 6.5 L11 9.5 L13 7.8 L16 11.5 Z" fill="#fff"/></svg>
<div class="t" style="top:735.58px;font-size:11.2px;font-weight:400;color:#2b2e36;letter-spacing:-0.1px;left:425.10px;">L</div>
<div class="t" style="top:735.58px;font-size:11.2px;font-weight:400;color:#2b2e36;letter-spacing:-0.3px;left:605.30px;">PROD019</div>
<div class="a" style="left:785px;top:731.2px;width:148.6px;height:18px;border:1px solid #8a8d94;border-radius:4px;background:#fff;text-align:center;font-size:11px;font-weight:700;line-height:16px;color:#2b2e36">Product</div>
<div class="t" style="top:735.58px;font-size:11.2px;font-weight:400;color:#2b2e36;right:255.00px;">60.00</div>
<div class="a" style="left:1489.2px;top:726.4000000000001px;width:149px;height:28.8px;overflow:hidden"><div class="t" style="right:-15px;top:9.18px;font-size:11.2px;color:#2b2e36">66.00</div></div>
<svg style="left:1659.8px;top:735.0000000000001px" width="3.4" height="12"><circle cx="1.7" cy="1.6" r="1.4" fill="#2b2e36"/><circle cx="1.7" cy="6.2" r="1.4" fill="#2b2e36"/><circle cx="1.7" cy="10.8" r="1.4" fill="#2b2e36"/></svg>
<div class="a" style="left:318.00px;top:783.00px;width:1366.70px;height:1.00px;background:#f0f2f5;"></div>
<svg style="left:353.3px;top:762.5px" width="20" height="14.3" viewBox="0 0 20 14.3"><rect width="20" height="14.3" rx="1.8" fill="#d2d4da"/><path d="M4 11.5 L8 6.5 L11 9.5 L13 7.8 L16 11.5 Z" fill="#fff"/></svg>
<div class="t" style="top:764.38px;font-size:11.2px;font-weight:400;color:#2b2e36;letter-spacing:-0.1px;left:425.10px;">P</div>
<div class="t" style="top:764.38px;font-size:11.2px;font-weight:400;color:#2b2e36;letter-spacing:-0.3px;left:605.30px;">PROD021</div>
<div class="a" style="left:785px;top:760.0px;width:148.6px;height:18px;border:1px solid #8a8d94;border-radius:4px;background:#fff;text-align:center;font-size:11px;font-weight:700;line-height:16px;color:#2b2e36">Product</div>
<div class="t" style="top:764.38px;font-size:11.2px;font-weight:400;color:#2b2e36;right:255.00px;">30.00</div>
<div class="a" style="left:1489.2px;top:755.2px;width:149px;height:28.8px;overflow:hidden"><div class="t" style="right:-15px;top:9.18px;font-size:11.2px;color:#2b2e36">33.00</div></div>
<svg style="left:1659.8px;top:763.8000000000001px" width="3.4" height="12"><circle cx="1.7" cy="1.6" r="1.4" fill="#2b2e36"/><circle cx="1.7" cy="6.2" r="1.4" fill="#2b2e36"/><circle cx="1.7" cy="10.8" r="1.4" fill="#2b2e36"/></svg>
<div class="a" style="left:318.00px;top:812.00px;width:1366.70px;height:1.00px;background:#f0f2f5;"></div>
<svg style="left:353.3px;top:791.3px" width="20" height="14.3" viewBox="0 0 20 14.3"><rect width="20" height="14.3" rx="1.8" fill="#d2d4da"/><path d="M4 11.5 L8 6.5 L11 9.5 L13 7.8 L16 11.5 Z" fill="#fff"/></svg>
<div class="t" style="top:793.18px;font-size:11.2px;font-weight:400;color:#2b2e36;letter-spacing:-0.1px;left:425.10px;">P</div>
<div class="t" style="top:793.18px;font-size:11.2px;font-weight:400;color:#2b2e36;letter-spacing:-0.3px;left:605.30px;">PROD022</div>
<div class="a" style="left:785px;top:788.8px;width:148.6px;height:18px;border:1px solid #8a8d94;border-radius:4px;background:#fff;text-align:center;font-size:11px;font-weight:700;line-height:16px;color:#2b2e36">Product</div>
<div class="t" style="top:793.18px;font-size:11.2px;font-weight:400;color:#2b2e36;right:255.00px;">20.00</div>
<div class="a" style="left:1489.2px;top:784.0px;width:149px;height:28.8px;overflow:hidden"><div class="t" style="right:-15px;top:9.18px;font-size:11.2px;color:#2b2e36">22.00</div></div>
<svg style="left:1659.8px;top:792.6px" width="3.4" height="12"><circle cx="1.7" cy="1.6" r="1.4" fill="#2b2e36"/><circle cx="1.7" cy="6.2" r="1.4" fill="#2b2e36"/><circle cx="1.7" cy="10.8" r="1.4" fill="#2b2e36"/></svg>
<div class="a" style="left:318.00px;top:841.00px;width:1366.70px;height:1.00px;background:#f0f2f5;"></div>
<svg style="left:353.3px;top:820.1px" width="20" height="14.3" viewBox="0 0 20 14.3"><rect width="20" height="14.3" rx="1.8" fill="#d2d4da"/><path d="M4 11.5 L8 6.5 L11 9.5 L13 7.8 L16 11.5 Z" fill="#fff"/></svg>
<div class="t" style="top:821.98px;font-size:11.2px;font-weight:400;color:#2b2e36;letter-spacing:-0.1px;left:425.10px;">P</div>
<div class="t" style="top:821.98px;font-size:11.2px;font-weight:400;color:#2b2e36;letter-spacing:-0.3px;left:605.30px;">PROD023</div>
<div class="a" style="left:785px;top:817.6px;width:148.6px;height:18px;border:1px solid #8a8d94;border-radius:4px;background:#fff;text-align:center;font-size:11px;font-weight:700;line-height:16px;color:#2b2e36">Product</div>
<div class="t" style="top:821.98px;font-size:11.2px;font-weight:400;color:#2b2e36;right:255.00px;">40.00</div>
<div class="a" style="left:1489.2px;top:812.8000000000001px;width:149px;height:28.8px;overflow:hidden"><div class="t" style="right:-15px;top:9.18px;font-size:11.2px;color:#2b2e36">44.00</div></div>
<svg style="left:1659.8px;top:821.4000000000001px" width="3.4" height="12"><circle cx="1.7" cy="1.6" r="1.4" fill="#2b2e36"/><circle cx="1.7" cy="6.2" r="1.4" fill="#2b2e36"/><circle cx="1.7" cy="10.8" r="1.4" fill="#2b2e36"/></svg>
<div class="a" style="left:318.00px;top:869.00px;width:1366.70px;height:1.00px;background:#f0f2f5;"></div>
<svg style="left:353.3px;top:848.9px" width="20" height="14.3" viewBox="0 0 20 14.3"><rect width="20" height="14.3" rx="1.8" fill="#d2d4da"/><path d="M4 11.5 L8 6.5 L11 9.5 L13 7.8 L16 11.5 Z" fill="#fff"/></svg>
<div class="t" style="top:850.78px;font-size:11.2px;font-weight:400;color:#2b2e36;letter-spacing:-0.1px;left:425.10px;">Programmable Thermostats</div>
<div class="t" style="top:850.78px;font-size:11.2px;font-weight:400;color:#2b2e36;letter-spacing:-0.3px;left:605.30px;">PROD017</div>
<div class="a" style="left:785px;top:846.4px;width:148.6px;height:18px;border:1px solid #8a8d94;border-radius:4px;background:#fff;text-align:center;font-size:11px;font-weight:700;line-height:16px;color:#2b2e36">Product</div>
<div class="t" style="top:850.78px;font-size:11.2px;font-weight:400;color:#2b2e36;letter-spacing:0.15px;left:964.90px;">Devices to control HVAC temper</div>
<div class="t" style="top:850.78px;font-size:11.2px;font-weight:400;color:#2b2e36;right:255.00px;">150.00</div>
<div class="a" style="left:1489.2px;top:841.6px;width:149px;height:28.8px;overflow:hidden"><div class="t" style="right:-15px;top:9.18px;font-size:11.2px;color:#2b2e36">165.00</div></div>
<svg style="left:1659.8px;top:850.2px" width="3.4" height="12"><circle cx="1.7" cy="1.6" r="1.4" fill="#2b2e36"/><circle cx="1.7" cy="6.2" r="1.4" fill="#2b2e36"/><circle cx="1.7" cy="10.8" r="1.4" fill="#2b2e36"/></svg>
<div class="a" style="left:318.00px;top:898.00px;width:1366.70px;height:1.00px;background:#f0f2f5;"></div>
<svg style="left:353.3px;top:877.7px" width="20" height="14.3" viewBox="0 0 20 14.3"><rect width="20" height="14.3" rx="1.8" fill="#d2d4da"/><path d="M4 11.5 L8 6.5 L11 9.5 L13 7.8 L16 11.5 Z" fill="#fff"/></svg>
<div class="t" style="top:879.58px;font-size:11.2px;font-weight:400;color:#2b2e36;letter-spacing:-0.1px;left:425.10px;">PVC Pipes</div>
<div class="t" style="top:879.58px;font-size:11.2px;font-weight:400;color:#2b2e36;letter-spacing:-0.3px;left:605.30px;">PROD008</div>
<div class="a" style="left:785px;top:875.2px;width:148.6px;height:18px;border:1px solid #8a8d94;border-radius:4px;background:#fff;text-align:center;font-size:11px;font-weight:700;line-height:16px;color:#2b2e36">Product</div>
<div class="t" style="top:879.58px;font-size:11.2px;font-weight:400;color:#2b2e36;letter-spacing:0.15px;left:964.90px;">Pipes used for waste water drai</div>
<div class="t" style="top:879.58px;font-size:11.2px;font-weight:400;color:#2b2e36;right:255.00px;">5.00</div>
<div class="a" style="left:1489.2px;top:870.4000000000001px;width:149px;height:28.8px;overflow:hidden"><div class="t" style="right:-15px;top:9.18px;font-size:11.2px;color:#2b2e36">5.50</div></div>
<svg style="left:1659.8px;top:879.0000000000001px" width="3.4" height="12"><circle cx="1.7" cy="1.6" r="1.4" fill="#2b2e36"/><circle cx="1.7" cy="6.2" r="1.4" fill="#2b2e36"/><circle cx="1.7" cy="10.8" r="1.4" fill="#2b2e36"/></svg>
<div class="a" style="left:318.00px;top:927.00px;width:1366.70px;height:1.00px;background:#f0f2f5;"></div>
<svg style="left:353.3px;top:906.5px" width="20" height="14.3" viewBox="0 0 20 14.3"><rect width="20" height="14.3" rx="1.8" fill="#d2d4da"/><path d="M4 11.5 L8 6.5 L11 9.5 L13 7.8 L16 11.5 Z" fill="#fff"/></svg>
<div class="t" style="top:908.38px;font-size:11.2px;font-weight:400;color:#2b2e36;letter-spacing:-0.1px;left:425.10px;">Safety Glasses</div>
<div class="t" style="top:908.38px;font-size:11.2px;font-weight:400;color:#2b2e36;letter-spacing:-0.3px;left:605.30px;">PROD020</div>
<div class="a" style="left:785px;top:904.0px;width:148.6px;height:18px;border:1px solid #8a8d94;border-radius:4px;background:#fff;text-align:center;font-size:11px;font-weight:700;line-height:16px;color:#2b2e36">Product</div>
<div class="t" style="top:908.38px;font-size:11.2px;font-weight:400;color:#2b2e36;letter-spacing:0.15px;left:964.90px;">Eye protection glasses</div>
<div class="t" style="top:908.38px;font-size:11.2px;font-weight:400;color:#2b2e36;right:255.00px;">10.00</div>
<div class="a" style="left:1489.2px;top:899.2px;width:149px;height:28.8px;overflow:hidden"><div class="t" style="right:-15px;top:9.18px;font-size:11.2px;color:#2b2e36">11.00</div></div>
<svg style="left:1659.8px;top:907.8000000000001px" width="3.4" height="12"><circle cx="1.7" cy="1.6" r="1.4" fill="#2b2e36"/><circle cx="1.7" cy="6.2" r="1.4" fill="#2b2e36"/><circle cx="1.7" cy="10.8" r="1.4" fill="#2b2e36"/></svg>
<div class="t" style="top:274.78px;font-size:11.2px;font-weight:400;color:#2b2e36;left:1296.50px;">n..</div>
<div class="a" style="left:1684.70px;top:265.60px;width:15.50px;height:668.20px;background:#f9f9fa;"></div>
<div class="a" style="left:1684.70px;top:265.60px;width:0.80px;height:668.20px;background:#eceef1;"></div>
<div class="a" style="left:1689.4px;top:268.7px;width:7.3px;height:612px;border-radius:4px;background:#c3c4c7"></div>
<div class="a" style="left:318.00px;top:934.00px;width:1382.20px;height:14.50px;background:#fefefe;"></div>
<div class="a" style="left:318.00px;top:934.00px;width:1382.20px;height:1.00px;background:#eef0f3;"></div>
<div class="a" style="left:1638.20px;top:934.00px;width:1.00px;height:14.50px;background:#e6e8ec;"></div>
<div class="a" style="left:320.5px;top:937.8px;width:661.5px;height:7.2px;border-radius:4px;background:#cacacd"></div>
<svg style="left:1709.3px;top:222.5px" width="11" height="7.5"><rect x="0" y="0" width="3" height="7.5" fill="#262930"/><rect x="4" y="0" width="3" height="7.5" fill="#262930"/><rect x="8" y="0" width="3" height="7.5" fill="#262930"/><rect x="0" y="0" width="11" height="1.2" fill="#262930"/></svg>
<div class="t" style="left:1708px;top:236.6px;font-size:11.2px;color:#2b2e36;writing-mode:vertical-rl;letter-spacing:0.2px">Columns</div>
<svg style="left:1709.6px;top:325px" width="10.2" height="9.4" viewBox="0 0 10 10"><path d="M0 0 H10 L6.3 4.6 V10 L3.7 8.4 V4.6 Z" fill="#262930"/></svg>
<div class="t" style="left:1708px;top:340px;font-size:11.2px;color:#2b2e36;writing-mode:vertical-rl;letter-spacing:0.2px">Filters</div>
<div class="a" style="left:318.00px;top:948.50px;width:1410.00px;height:43.50px;background:#f3f6fb;"></div>
<div class="a" style="left:318.00px;top:948.20px;width:1410.00px;height:0.80px;background:#dfe2e8;"></div>
<div class="a" style="left:318.00px;top:991.00px;width:1410.00px;height:1.00px;background:#e3e5ea;"></div>
<div class="t" style="left:1418px;top:964.6px;font-size:11.5px;color:#2b2e36;letter-spacing:0.1px"><b>1</b> to <b>25</b> of <b>34</b></div>
<div class="t" style="left:1585px;top:964.6px;font-size:11.5px;color:#2b2e36;letter-spacing:-0.15px">Page <b>1</b> of <b>2</b></div>
<div class="a" style="left:1522.4px;top:960.8px;width:19.6px;height:19.4px;border-radius:4px;background:#f3f6fb;border:1px solid #eceef3"></div>
<div class="a" style="left:1553.4px;top:960.8px;width:19.6px;height:19.4px;border-radius:4px;background:#f3f6fb;border:1px solid #eceef3"></div>
<div class="a" style="left:1654.1px;top:960.8px;width:19.6px;height:19.4px;border-radius:4px;background:#fdfdfd;border:1px solid #fdfdfd"></div>
<div class="a" style="left:1685.9px;top:960.8px;width:19.6px;height:19.4px;border-radius:4px;background:#fdfdfd;border:1px solid #fdfdfd"></div>
<svg style="left:1528px;top:966px" width="9" height="9"><path d="M1 0.5 V8.5 M7.5 0.8 L3.8 4.5 L7.5 8.2" stroke="#9a9ca3" stroke-width="1.2" fill="none"/></svg>
<svg style="left:1560px;top:966px" width="7" height="9"><path d="M5 0.8 L1.3 4.5 L5 8.2" stroke="#9a9ca3" stroke-width="1.2" fill="none"/></svg>
<svg style="left:1661px;top:966px" width="7" height="9"><path d="M1.5 0.8 L5.2 4.5 L1.5 8.2" stroke="#22252b" stroke-width="1.4" fill="none"/></svg>
<svg style="left:1691px;top:966px" width="10" height="9"><path d="M1 0.8 L4.7 4.5 L1 8.2 M8 0.5 V8.5" stroke="#22252b" stroke-width="1.4" fill="none"/></svg>
<div class="a" style="left:0;top:0;width:1728px;height:992px;background:rgba(0,0,0,0.2)"></div>
<div class="a" style="left:432px;top:134.6px;width:864px;height:722.4px;border-radius:4px;background:#f4f4f4;box-shadow:0 2px 3px rgba(0,0,0,.12),0 6px 20px 2px rgba(0,0,0,.16),0 12px 40px 4px rgba(0,0,0,.05);overflow:hidden"></div>
<div class="a" style="left:432px;top:134.6px;width:864px;height:57.1px;border-radius:4px 4px 0 0;background:#3b53dc"></div>
<svg style="left:440px;top:150px" width="30" height="27" viewBox="440 150 30 27"><path d="M446.6 163.4 C449.5 158.6 453 156.4 457 156.4 C461 156.4 464.5 158.6 467.3 163.4 C464.5 168.2 461 170.4 457 170.4 C453 170.4 449.5 168.2 446.6 163.4 Z" fill="#f0f0f0"/><circle cx="457" cy="163.4" r="4.4" fill="#3b53dc"/><circle cx="457" cy="163.4" r="2.5" fill="#f0f0f0"/></svg>
<svg style="left:490px;top:150px" width="30" height="27" viewBox="490 150 30 27"><path d="M504 154.3 L513.7 159.8 L513.7 161.6 L512 162.8 L512 168.3 L504 172.7 L496 168.3 L496 162.8 L494.3 161.6 L494.3 159.8 Z" fill="#f0f0f0"/><path d="M498 161.6 L502.9 164.2 L502.9 169.4 L498 166.8 Z" fill="#3b53dc"/><path d="M504.3 156.6 L509.2 159.4 L504.3 162.1 Z" fill="#3b53dc"/><path d="M505.6 163.9 L511.2 160.9" stroke="#3b53dc" stroke-width="1"/><path d="M505.2 166 L510 163.5 L510 167.1 L505.2 169.5 Z" fill="#3b53dc"/></svg>
<svg style="left:540.9px;top:155.4px" width="20.4" height="16.4" viewBox="0 0 20.4 16.4"><rect x="5.1" y="0.6" width="4.8" height="4.8" fill="none" stroke="#f0f0f0" stroke-width="1.5"/><rect x="0.6" y="5.8" width="4.8" height="4.8" fill="none" stroke="#f0f0f0" stroke-width="1.5"/><rect x="5.1" y="5.8" width="4.8" height="4.8" fill="none" stroke="#f0f0f0" stroke-width="1.5"/><rect x="9.7" y="5.8" width="4.8" height="4.8" fill="none" stroke="#f0f0f0" stroke-width="1.5"/><rect x="14.2" y="5.8" width="4.8" height="4.8" fill="none" stroke="#f0f0f0" stroke-width="1.5"/><rect x="9.7" y="11.0" width="4.8" height="4.8" fill="none" stroke="#f0f0f0" stroke-width="1.5"/></svg>
<svg style="left:589px;top:155px" width="17" height="17" viewBox="0 0 17 17"><path d="M0.5 13.5 L11 3 L14 6 L3.5 16.5 L0.5 16.5 Z" fill="#f0f0f0" stroke="#f0f0f0" stroke-width="0.6" stroke-linejoin="round"/><path d="M12.2 1.8 L13.5 0.5 Q14.3 -0.1 15.1 0.5 L16.5 1.9 Q17.1 2.7 16.5 3.5 L15.2 4.8 Z" fill="#f0f0f0"/></svg>
<svg style="left:638px;top:154.6px" width="13" height="17.4" viewBox="0 0 13 17.4"><rect x="0" y="2" width="13" height="2" rx="0.6" fill="#f0f0f0"/><rect x="4.2" y="0.2" width="4.6" height="2.2" rx="0.8" fill="#f0f0f0"/><path d="M1 4.6 H12 V15.4 Q12 17.4 10 17.4 H3 Q1 17.4 1 15.4 Z" fill="#f0f0f0"/></svg>
<svg style="left:1264.3px;top:157px" width="13" height="13" viewBox="0 0 13 13"><path d="M0.7 0.7 L12.3 12.3 M12.3 0.7 L0.7 12.3" stroke="#f0f0f0" stroke-width="1.6"/></svg>
<div class="a" style="left:446px;top:199px;width:411px;height:109px;background:#fff;border-radius:2px;box-shadow:0 2px 1px -1px rgba(0,0,0,.2),0 1px 1px 0 rgba(0,0,0,.14),0 1px 3px 0 rgba(0,0,0,.12);"></div>
<svg style="left:600px;top:200px" width="100" height="105" viewBox="600 200 100 105">
<path d="M663.5 213 L680.4 209.5 L678.5 291 L663.5 294 Z" fill="#595b60"/>
<path d="M633.3 213 L663.5 213 L663.5 294 L637 291 Z" fill="#2c2e33"/>
<path d="M632.8 212.9 L644.4 209 L679.9 209.3 L663.5 213.8 Z" fill="#8e8f93"/>
<path d="M652 215 L662.5 215 L662.5 227 L652 227 Z" fill="#6e7075"/>
<path d="M634.9 227 L662.4 229.5 L662.4 231.5 L634.9 229 Z" fill="#a3a4a8"/>
<path d="M644.4 234.4 L662.4 234.4 L662.4 247.6 L644.4 247.6 Q641.5 241 644.4 234.4 Z" fill="#b9babd"/>
<path d="M635.5 250.8 L662.4 254 L662.4 256.2 L635.5 253 Z" fill="#a3a4a8"/>
<path d="M613.8 280.4 L622.2 263.5 L644.4 260.3 L649.7 263.5 L657.1 285.7 L645.5 294.2 L634.9 298.4 L619 293.1 Z" fill="#cbcccf"/>
<path d="M634.9 268.8 L646.6 262.4 L657.1 284.7 L645.5 294.2 L639.2 290 Z" fill="#75777c"/>
<path d="M620 270 L627 268 L629 290 L622 291 Z" fill="#e0e1e3"/>
<path d="M612.5 279 L620.5 276 L621.5 278 L613.5 281.5 Z" fill="#4a4c51"/>
<path d="M621 264 L629 262 L629.5 264 L621.5 266 Z" fill="#8a8c90"/>
<circle cx="639.5" cy="274.0" r="0.55" fill="#c0392b"/><circle cx="642.0" cy="272.5" r="0.55" fill="#c0392b"/><circle cx="644.5" cy="271.5" r="0.55" fill="#c0392b"/><circle cx="638.5" cy="277.0" r="0.55" fill="#c0392b"/><circle cx="641.0" cy="276.0" r="0.55" fill="#c0392b"/><circle cx="643.5" cy="275.0" r="0.55" fill="#c0392b"/><circle cx="646.0" cy="274.5" r="0.55" fill="#c0392b"/><circle cx="648.5" cy="275.5" r="0.55" fill="#c0392b"/><circle cx="639.0" cy="280.0" r="0.55" fill="#c0392b"/><circle cx="641.5" cy="279.0" r="0.55" fill="#c0392b"/><circle cx="644.0" cy="278.5" r="0.55" fill="#c0392b"/><circle cx="646.5" cy="278.0" r="0.55" fill="#c0392b"/><circle cx="649.0" cy="279.0" r="0.55" fill="#c0392b"/><circle cx="651.0" cy="280.5" r="0.55" fill="#c0392b"/><circle cx="639.5" cy="283.0" r="0.55" fill="#c0392b"/><circle cx="642.0" cy="282.5" r="0.55" fill="#c0392b"/><circle cx="644.5" cy="282.0" r="0.55" fill="#c0392b"/><circle cx="647.0" cy="281.5" r="0.55" fill="#c0392b"/><circle cx="649.5" cy="282.5" r="0.55" fill="#c0392b"/><circle cx="641.0" cy="286.0" r="0.55" fill="#c0392b"/><circle cx="643.5" cy="285.5" r="0.55" fill="#c0392b"/><circle cx="646.0" cy="285.0" r="0.55" fill="#c0392b"/><circle cx="648.5" cy="285.5" r="0.55" fill="#c0392b"/><circle cx="642.5" cy="289.0" r="0.55" fill="#c0392b"/><circle cx="645.0" cy="288.5" r="0.55" fill="#c0392b"/>
</svg>
<div class="a" style="left:871px;top:199.8px;width:411px;height:85.4px;background:#fff;border-radius:2px;box-shadow:0 2px 1px -1px rgba(0,0,0,.2),0 1px 1px 0 rgba(0,0,0,.14),0 1px 3px 0 rgba(0,0,0,.12);"></div>
<div class="a" style="left:878.9px;top:207px;width:60.4px;height:18.5px;background:#e4e4e4;border-radius:3px"></div>
<div class="t" style="top:211.93px;font-size:10.2px;font-weight:400;color:#7b7b7b;letter-spacing:0.05px;left:885.60px;">PROD003</div>
<div class="t" style="top:208.58px;font-size:13.2px;font-weight:400;color:#1a1c22;letter-spacing:0.1px;left:951.00px;-webkit-text-stroke:0.35px #1a1c22;">Air Handlers</div>
<div class="t" style="top:235.89px;font-size:12.6px;font-weight:400;color:#262930;letter-spacing:0.42px;left:878.90px;">Devices used to condition and circulate air</div>
<div class="a" style="left:878.9px;top:259px;width:51px;height:19px;background:#178a78;border-radius:3px"></div>
<div class="t" style="top:264.23px;font-size:10.2px;font-weight:700;color:#ffffff;letter-spacing:-0.1px;left:885.60px;">Product</div>
<div class="a" style="left:871px;top:292px;width:411px;height:361px;background:#fff;border-radius:2px;box-shadow:0 2px 1px -1px rgba(0,0,0,.2),0 1px 1px 0 rgba(0,0,0,.14),0 1px 3px 0 rgba(0,0,0,.12);"></div>
<div class="t" style="top:317.66px;font-size:14.4px;font-weight:400;color:#101217;letter-spacing:0.55px;left:893.30px;-webkit-text-stroke:0.15px #101217;">Controls and Automation</div>
<div class="t" style="top:338.69px;font-size:12.6px;font-weight:400;color:#6f7178;letter-spacing:0.4px;left:893.30px;">Cost Category</div>
<div class="t" style="top:386.96px;font-size:14.4px;font-weight:400;color:#101217;letter-spacing:0.2px;left:893.30px;-webkit-text-stroke:0.15px #101217;">$1,200.00</div>
<div class="t" style="top:407.99px;font-size:12.6px;font-weight:400;color:#6f7178;letter-spacing:0.4px;left:893.30px;">Unit Cost</div>
<div class="t" style="top:456.26px;font-size:14.4px;font-weight:400;color:#101217;letter-spacing:0.2px;left:893.30px;-webkit-text-stroke:0.15px #101217;">Each</div>
<div class="t" style="top:477.29px;font-size:12.6px;font-weight:400;color:#6f7178;letter-spacing:0.4px;left:893.30px;">Unit</div>
<div class="t" style="top:525.56px;font-size:14.4px;font-weight:400;color:#101217;letter-spacing:0.2px;left:893.30px;-webkit-text-stroke:0.15px #101217;">$1,320.00</div>
<div class="t" style="top:546.59px;font-size:12.6px;font-weight:400;color:#6f7178;letter-spacing:0.4px;left:893.30px;">Offered Unit Price</div>
<div class="t" style="top:594.86px;font-size:14.4px;font-weight:400;color:#101217;letter-spacing:0.2px;left:893.30px;-webkit-text-stroke:0.15px #101217;">USD</div>
<div class="t" style="top:615.89px;font-size:12.6px;font-weight:400;color:#6f7178;letter-spacing:0.4px;left:893.30px;">Currency</div>
<div class="a" style="left:871px;top:660.4px;width:411px;height:182px;background:#fff;border-radius:2px;box-shadow:0 2px 1px -1px rgba(0,0,0,.2),0 1px 1px 0 rgba(0,0,0,.14),0 1px 3px 0 rgba(0,0,0,.12);"></div>
<div class="t" style="top:677.49px;font-size:12.6px;font-weight:400;color:#6f7178;letter-spacing:0.55px;left:893.30px;">Location</div>
<div class="t" style="top:677.49px;font-size:12.6px;font-weight:400;color:#6f7178;letter-spacing:0.55px;left:1009.20px;">In stock</div>
<div class="t" style="top:677.49px;font-size:12.6px;font-weight:400;color:#6f7178;letter-spacing:0.5px;left:1091.80px;">Available</div>
<div class="t" style="top:677.49px;font-size:12.6px;font-weight:400;color:#6f7178;letter-spacing:0.4px;left:1184.70px;">Ordered</div>
<div class="a" style="left:871.00px;top:706.70px;width:411.00px;height:1.00px;background:#ececec;"></div>
<div class="a" style="left:871.00px;top:774.40px;width:411.00px;height:1.00px;background:#ececec;"></div>
<div class="t" style="top:726.09px;font-size:12.6px;font-weight:700;color:#1a1c22;letter-spacing:0.05px;left:893.30px;">Site A</div>
<div class="t" style="top:745.09px;font-size:12.6px;font-weight:700;color:#1a1c22;letter-spacing:0.1px;left:893.30px;">Warehouse</div>
<div class="t" style="top:735.59px;font-size:12.6px;font-weight:400;color:#262930;letter-spacing:0.3px;left:1009.20px;">5</div>
<div class="t" style="top:735.59px;font-size:12.6px;font-weight:400;color:#262930;letter-spacing:0.3px;left:1091.80px;">5</div>
<div class="t" style="top:735.59px;font-size:12.6px;font-weight:400;color:#262930;letter-spacing:0.3px;left:1184.70px;">0</div>
<div class="t" style="top:792.69px;font-size:12.6px;font-weight:700;color:#1a1c22;letter-spacing:0.05px;left:893.30px;">Main</div>
<div class="t" style="top:811.69px;font-size:12.6px;font-weight:700;color:#1a1c22;letter-spacing:0.1px;left:893.30px;">Warehouse</div>
<div class="t" style="top:802.19px;font-size:12.6px;font-weight:400;color:#262930;letter-spacing:0.3px;left:1009.20px;">150</div>
<div class="t" style="top:802.19px;font-size:12.6px;font-weight:400;color:#262930;letter-spacing:0.3px;left:1091.80px;">150</div>
<div class="t" style="top:802.19px;font-size:12.6px;font-weight:400;color:#262930;letter-spacing:0.3px;left:1184.70px;">0</div>
</div></body></html>
